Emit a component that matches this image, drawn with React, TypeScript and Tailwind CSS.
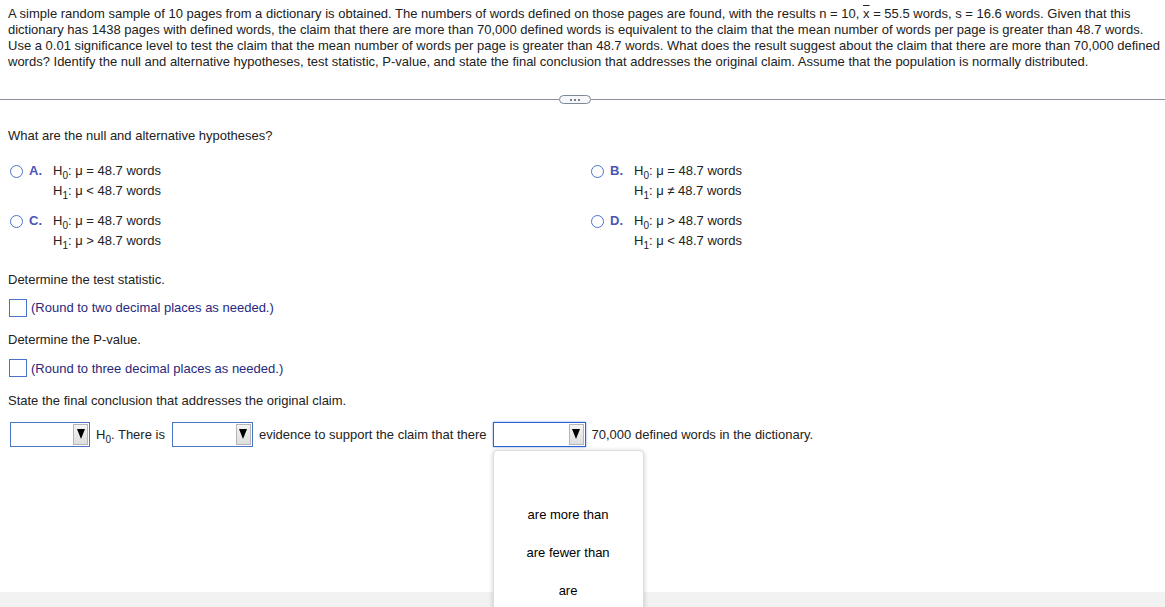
import React from "react";

const font = { fontFamily: '"Liberation Sans", Arial, sans-serif' };

function Sub({ children }: { children: React.ReactNode }) {
  return <span className="relative top-[4px] text-[10px] leading-none">{children}</span>;
}

function H({ n }: { n: string }) {
  return (
    <>
      H<Sub>{n}</Sub>
    </>
  );
}

function Radio() {
  return <span className="inline-block h-[13px] w-[13px] rounded-full border-[1.5px] border-[#4d73c7] bg-white" />;
}

function Option({ letter, h0, h1 }: { letter: string; h0: string; h1: string }) {
  return (
    <div className="flex items-start">
      <div className="flex h-[20px] items-center">
        <Radio />
        <span className="ml-[6px] w-[24px] font-bold text-[#4a55b5]">{letter}.</span>
      </div>
      <div className="flex flex-col">
        <div className="h-[20px] leading-[20px]">
          <H n="0" />: μ {h0} 48.7 words
        </div>
        <div className="h-[20px] leading-[20px]">
          <H n="1" />: μ {h1} 48.7 words
        </div>
      </div>
    </div>
  );
}

function Select({ width, focused }: { width: number; focused?: boolean }) {
  return (
    <div
      className={`relative flex h-[25px] items-start justify-end bg-white pr-[1px] pt-[1px] ${
        focused
          ? "border border-[#2d62cf] shadow-[0_0_2px_#7aa0e8]"
          : "border border-[#4a74c8]"
      }`}
      style={{ width }}
    >
      <div className="flex h-[21px] w-[15px] items-start justify-center border border-[#b5b5b5] bg-gradient-to-b from-[#f4f4f4] to-[#dedede] pt-[4px]">
        <span className="h-0 w-0 border-l-[4.5px] border-r-[4.5px] border-t-[10px] border-l-transparent border-r-transparent border-t-black" />
      </div>
    </div>
  );
}

export default function App() {
  return (
    <div className="relative h-[607px] overflow-hidden bg-white text-[13px] text-[#222]" style={font}>
      <div className="h-[592px]">
        <p className="px-[8px] pt-[6px] leading-[16px] whitespace-nowrap">
          A simple random sample of 10 pages from a dictionary is obtained. The numbers of words defined on those pages are found, with the results n = 10,{" "}
          <span className="overline">x</span> = 55.5 words, s = 16.6 words. Given that this
          <br />
          dictionary has 1438 pages with defined words, the claim that there are more than 70,000 defined words is equivalent to the claim that the mean number of words per page is greater than 48.7 words.
          <br />
          Use a 0.01 significance level to test the claim that the mean number of words per page is greater than 48.7 words. What does the result suggest about the claim that there are more than 70,000 defined
          <br />
          words? Identify the null and alternative hypotheses, test statistic, P-value, and state the final conclusion that addresses the original claim. Assume that the population is normally distributed.
        </p>

        <div className="relative mt-[25px] flex h-[9px] items-center">
          <div className="h-px flex-1 bg-[#8d929a]" />
          <div className="flex h-[9px] w-[32px] items-center justify-center gap-[2px] rounded-full border border-[#7e8794] bg-[#f5f7fa]">
            <span className="h-[2px] w-[2px] rounded-full bg-[#555]" />
            <span className="h-[2px] w-[2px] rounded-full bg-[#555]" />
            <span className="h-[2px] w-[2px] rounded-full bg-[#555]" />
          </div>
          <div className="h-px w-[574px] bg-[#8d929a]" />
        </div>

        <div className="mt-[24px] px-[8px] leading-[16px]">What are the null and alternative hypotheses?</div>

        <div className="mt-[17px] grid grid-cols-[581px_1fr] gap-y-[10px] pl-[10px]">
          <Option letter="A" h0="=" h1="<" />
          <Option letter="B" h0="=" h1="≠" />
          <Option letter="C" h0="=" h1=">" />
          <Option letter="D" h0=">" h1="<" />
        </div>

        <div className="mt-[21px] px-[8px] leading-[16px]">Determine the test statistic.</div>
        <div className="mt-[10px] flex items-center px-[9px]">
          <span className="inline-block h-[18px] w-[18px] border border-[#4a74c8] bg-white" />
          <span className="ml-[4px] text-[#28287e]">(Round to two decimal places as needed.)</span>
        </div>

        <div className="mt-[14px] px-[8px] leading-[16px]">Determine the P-value.</div>
        <div className="mt-[11px] flex items-center px-[9px]">
          <span className="inline-block h-[18px] w-[18px] border border-[#4a74c8] bg-white" />
          <span className="ml-[4px] text-[#28287e]">(Round to three decimal places as needed.)</span>
        </div>

        <div className="mt-[15px] px-[8px] leading-[16px]">State the final conclusion that addresses the original claim.</div>

        <div className="mt-[13px] flex items-center pl-[10px]">
          <Select width={80} />
          <span className="ml-[6px]">
            <H n="0" />. There is
          </span>
          <span className="ml-[7px]">
            <Select width={81} />
          </span>
          <span className="ml-[6px]">evidence to support the claim that there</span>
          <div className="relative ml-[6px]">
            <Select width={93} focused />
            <div className="absolute left-0 top-[28px] z-10 flex h-[170px] w-[151px] flex-col items-center rounded-[4px] border border-[#ddd] bg-white pt-[54px] shadow-[0_1px_5px_rgba(0,0,0,0.2)]">
              <div className="h-[38px] text-black">are more than</div>
              <div className="h-[38px] text-black">are fewer than</div>
              <div className="h-[38px] text-black">are</div>
            </div>
          </div>
          <span className="ml-[6px]">70,000 defined words in the dictionary.</span>
        </div>
      </div>
      <div className="h-[15px] bg-[#f2f2f2]" />
    </div>
  );
}
